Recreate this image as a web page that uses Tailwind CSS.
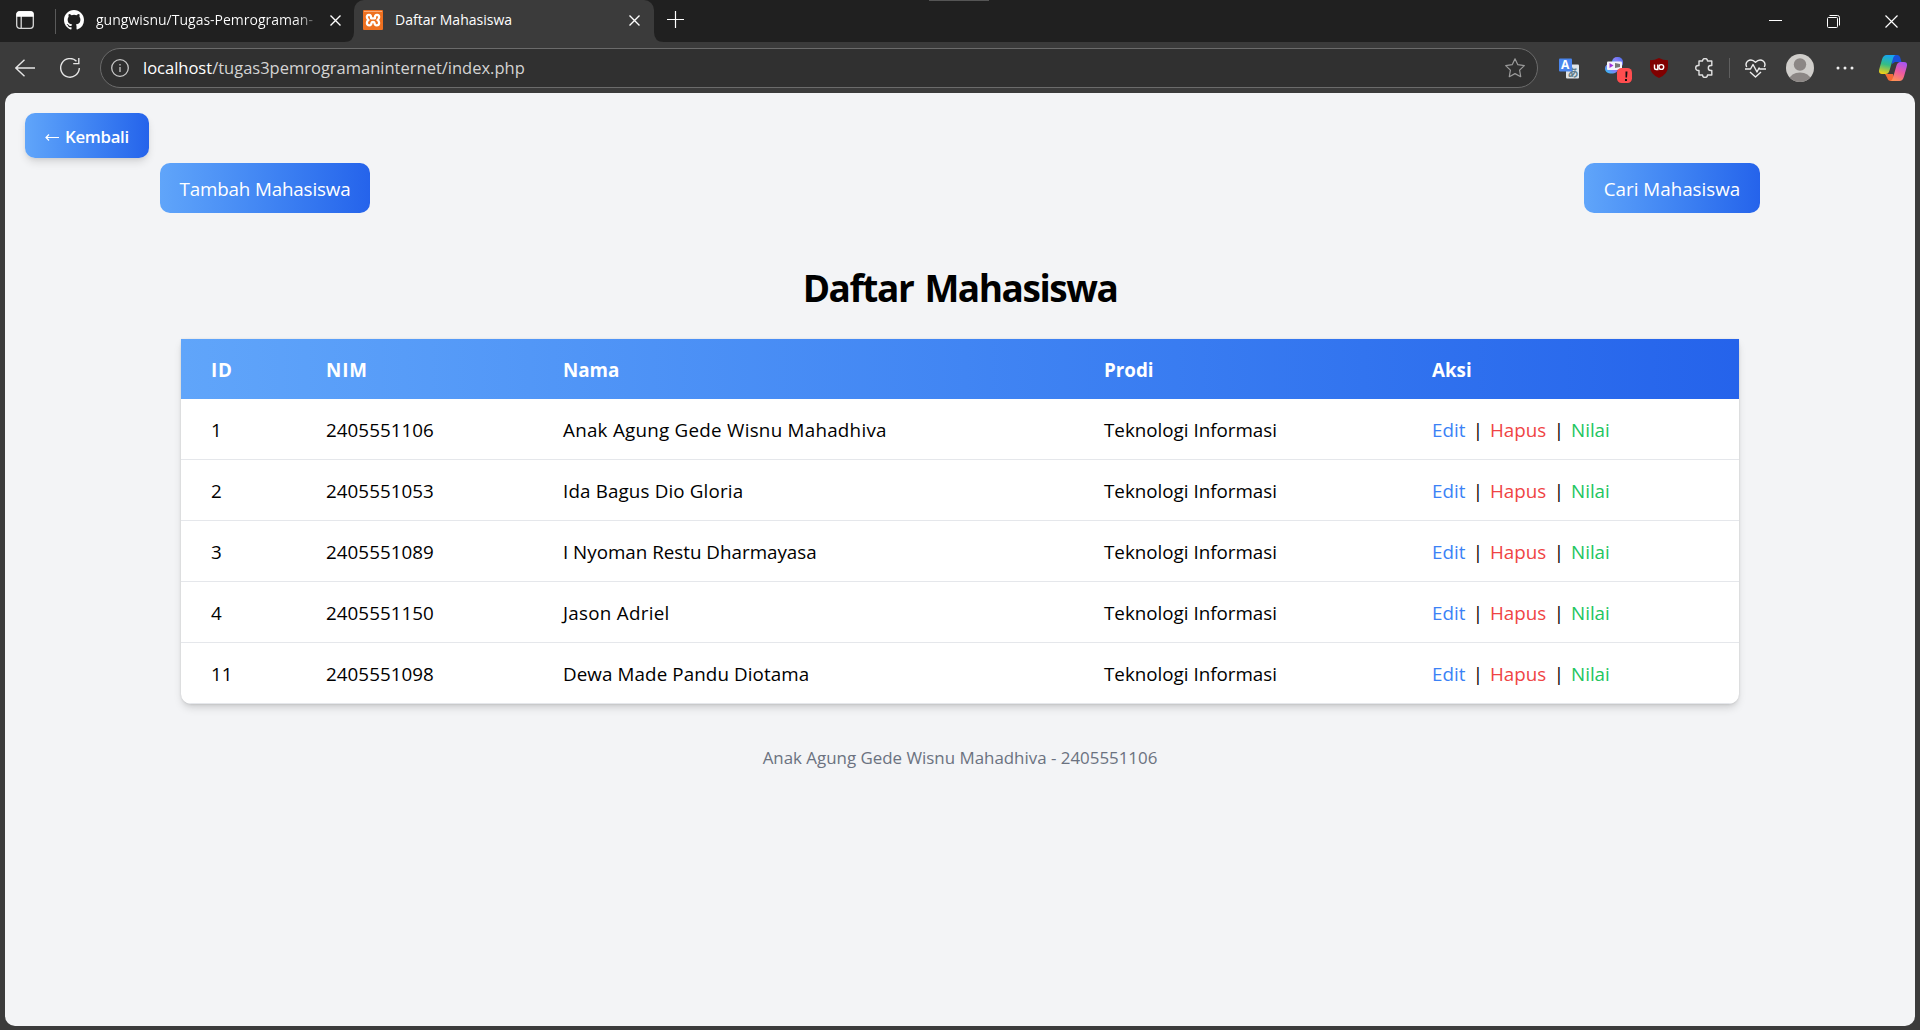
<!DOCTYPE html>
<html lang="id">
<head>
<meta charset="utf-8">
<title>Daftar Mahasiswa</title>
<script src="https://cdn.jsdelivr.net/npm/@tailwindcss/browser@4"></script>
</head>
<body class="flex h-[1030px] w-[1920px] flex-col overflow-hidden bg-[#3b3b3b] font-['Open_Sans',sans-serif]">
<!-- Tab strip -->
<header class="relative flex h-[42px] shrink-0 bg-[#202020] text-[14px] text-white">
  <div class="absolute left-[929px] top-0 h-px w-[60px] bg-[#555]"></div>
  <div class="flex h-[42px] w-[55px] items-center pl-4">
    <svg class="h-[18px] w-[18px] -translate-y-px" viewBox="0 0 18 18" fill="none" stroke="#d8d8d8" stroke-width="1.3"><rect x=".7" y=".7" width="16.6" height="16.6" rx="3"/><path d="M5.2 5v12"/><path d="M1 3.500Q1 1 3.500 1h11q2.500 0 2.500 2.500V5H1z" fill="#fff" stroke="#fff"/></svg>
  </div>
  <div class="mt-[9px] h-[25px] w-px bg-[#5a5a5a]"></div>
  <div class="flex h-10 w-[298px] items-center pl-2">
    <svg class="h-5 w-5 shrink-0" viewBox="0 0 16 16" fill="#fff"><path d="M8 0C3.580 0 0 3.580 0 8c0 3.540 2.290 6.530 5.470 7.590.4.070.55-.17.55-.38v-1.490c-2.010.37-2.530-.49-2.690-.94-.09-.23-.48-.94-.82-1.130-.28-.15-.68-.52-.01-.53.63-.01 1.080.58 1.230.82.72 1.210 1.870.87 2.330.66.07-.52.28-.87.51-1.070-1.780-.2-3.640-.89-3.640-3.950 0-.87.310-1.590.82-2.150-.08-.2-.36-1.020.08-2.120 0 0 .67-.21 2.200.82a7.600 7.600 0 0 1 4 0c1.530-1.040 2.200-.82 2.200-.82.44 1.100.16 1.920.08 2.120.51.56.82 1.270.82 2.150 0 3.070-1.870 3.750-3.650 3.950.29.25.54.73.54 1.480v2.200c0 .21.150.46.55.38A8 8 0 0 0 16 8c0-4.420-3.580-8-8-8z"/></svg>
    <div class="-mt-px ml-3 w-[222px] overflow-hidden whitespace-nowrap bg-linear-to-r from-white from-90% to-[#444] bg-clip-text text-transparent">gungwisnu/Tugas-Pemrograman-</div>
    <svg class="ml-3 h-[11px] w-[11px] shrink-0" viewBox="0 0 11 11" stroke="#fff" stroke-width="1.400"><path d="M.5.5l10 10M10.500.5l-10 10"/></svg>
  </div>
  <div class="relative flex h-[42px] w-[300px] items-center rounded-t-[10px] bg-[#3b3b3b] pb-0.5 pl-[9px]">
    <svg class="absolute -left-[10px] bottom-0 h-[10px] w-[10px]" viewBox="0 0 10 10"><path d="M10 0v10H0Q10 10 10 0z" fill="#3b3b3b"/></svg>
    <svg class="absolute -right-[10px] bottom-0 h-[10px] w-[10px]" viewBox="0 0 10 10"><path d="M0 0v10h10Q0 10 0 0z" fill="#3b3b3b"/></svg>
    <svg class="h-5 w-5" viewBox="0 0 20 20"><rect width="20" height="20" rx="1" fill="#ee7020"/><path d="M1 1.500h18" stroke="#f9a875"/><path d="M8 7.800Q8.300 4.800 6 4.800Q3.600 5 3.900 7.300Q4 9 5.500 10Q3.800 11 3.900 13Q4 15.400 6.300 15.400Q8.300 15.300 8.500 13Q8.700 11.800 10 11.800Q11.300 11.800 11.500 13Q11.700 15.300 13.700 15.400Q16 15.400 16.100 13Q16.200 11 14.500 10Q16 9 16.100 7.300Q16.400 5 14 4.800Q11.700 4.800 12 7.800M8 8.300h4" fill="none" stroke="#fff" stroke-width="2.300" stroke-linecap="round" stroke-linejoin="round"/></svg>
    <span class="-mt-px ml-3">Daftar Mahasiswa</span>
    <svg class="absolute left-[275px] top-[15px] h-[11px] w-[11px]" viewBox="0 0 11 11" stroke="#fff" stroke-width="1.400"><path d="M.5.5l10 10M10.500.5l-10 10"/></svg>
  </div>
  <svg class="ml-[13px] mt-[11px] h-[17px] w-[17px]" viewBox="0 0 17 17" stroke="#fff" stroke-width="1.200"><path d="M8.500 0v17M0 8.500h17"/></svg>
  <div class="ml-auto flex h-[42px] items-center gap-[45px] pr-[22px]">
    <svg class="h-[13px] w-[13px]" viewBox="0 0 13 13" stroke="#fff"><path d="M0 5.500h13"/></svg>
    <svg class="h-[13px] w-[13px]" viewBox="0 0 13 13" fill="none" stroke="#fff"><rect x=".5" y="2.500" width="10" height="10" rx="1"/><path d="M2.500.5h8q2 0 2 2v8"/></svg>
    <svg class="h-[13px] w-[13px]" viewBox="0 0 13 13" stroke="#fff" stroke-width="1.200"><path d="M.5.5l12 12M12.500.5l-12 12"/></svg>
  </div>
</header>
<!-- Toolbar -->
<nav class="flex h-[51px] shrink-0 items-start pt-[6px]">
  <div class="flex h-10 w-[100px] items-center pl-[15px]">
    <svg class="h-[18px] w-5" viewBox="0 0 20 18" fill="none" stroke="#e6e6e6" stroke-width="1.400"><path d="M20 9H.8M9.500.7L.8 9l8.700 8.300"/></svg>
    <svg class="ml-[25px] h-5 w-5" viewBox="0 0 20 20" fill="none" stroke="#e6e6e6" stroke-width="1.400"><path d="M16.500 3.200A9.300 9.300 0 1 0 19.300 10M18.800 0v5.600h-5.600"/></svg>
  </div>
  <div class="flex h-10 w-[1438px] items-center rounded-full border border-[#6b6b6b] bg-[#303030] pl-[10px] text-[16.5px] text-[#d4d4d4]">
    <svg class="h-[18px] w-[18px]" viewBox="0 0 18 18" fill="none" stroke="#c8c8c8" stroke-width="1.300"><circle cx="9" cy="9" r="8.300"/><path d="M9 8v5M9 5v1.600"/></svg>
    <span class="ml-[14px] whitespace-nowrap"><span class="text-white">localhost</span>/tugas3pemrogramaninternet/index.php</span>
    <svg class="ml-auto mr-3 h-5 w-5" viewBox="0 0 20 20" fill="none" stroke="#9a9a9a" stroke-width="1.200" stroke-linejoin="round"><path d="M10 .8l2.800 5.900 6.500.9-4.700 4.500 1.100 6.600L10 15.600l-5.700 3.100 1.100-6.600L.7 7.600l6.500-.9z"/></svg>
  </div>
  <div class="flex h-10 items-center">
    <svg class="ml-[21px] h-[21px] w-5 overflow-visible" viewBox="0 0 20 21"><rect x="7" y="6.500" width="13" height="14" rx="1" fill="#dfe4e8"/><text x="8.500" y="18.500" font-size="11" font-weight="700" fill="#607d8b" font-family="Noto Sans CJK JP, sans-serif">あ</text><path d="M1 .5h11q1 0 1 1v12H1q-1 0-1-1v-11q0-1 1-1z" fill="#4a86ee"/><text x="2" y="11" font-size="12" font-weight="700" fill="#fff">A</text></svg>
    <svg class="ml-[26px] mt-1 h-[26px] w-[27px]" viewBox="0 0 27 26"><defs><linearGradient id="bub" x1="0" y1="1" x2="1" y2="0"><stop stop-color="#20c8f5"/><stop offset=".55" stop-color="#8b7cf6"/><stop offset="1" stop-color="#3d6ff0"/></linearGradient></defs><rect x="7" y="0" width="11" height="11" rx="5" fill="url(#bub)"/><rect x="0" y="6.500" width="13" height="10" rx="5" fill="url(#bub)"/><rect x="2" y="4.500" width="15" height="8.500" rx="1" fill="#f4f3fa"/><path d="M4.500 6v5l4-2.500z" fill="#a02ee0"/><path d="M10 6l5 1v3l-5 1z" fill="#777"/><rect x="12" y="11" width="15" height="15" rx="4.500" fill="#ff4d4f"/><path d="M20.500 14.500h2l-.5 6h-1.500zM20 22h2v2h-2z" fill="#111"/></svg>
    <svg class="ml-[18px] h-5 w-[18px]" viewBox="0 0 18 20"><path d="M9 0q4 2.200 9 2.200V9q0 7-9 11Q0 16 0 9V2.200Q5 2.200 9 0z" fill="#800000"/><path d="M4.500 6.500v3.200q0 1.800 1.800 1.800h1.500V6.500" fill="none" stroke="#fff" stroke-width="1.400"/><circle cx="11.300" cy="9" r="2.400" fill="none" stroke="#fff" stroke-width="1.400"/></svg>
    <svg class="ml-[27px] h-5 w-[19px]" viewBox="0 0 19 20" fill="none" stroke="#e0e0e0" stroke-width="1.400" stroke-linejoin="round"><path d="M4 3h3.500a2.500 2.500 0 0 1 5 0h4.300v4.500h-1a2.500 2.500 0 0 0 0 5h1V17h-4.300a2.500 2.500 0 0 1-5 0H4v-4.500H3.200a2.500 2.500 0 0 1 0-5H4z"/></svg>
    <div class="ml-[15px] h-5 w-px bg-[#5f5f5f]"></div>
    <svg class="ml-[15px] h-[19px] w-[21px]" viewBox="0 0 21 19" fill="none" stroke="#ededed" stroke-width="1.400" stroke-linejoin="round"><path d="M1.700 8Q0 4.500 2.500 2.200 6.500-.8 10.500 3.200q4-4 8-1Q21 4.500 19.300 8M0 10h5.500l2.500-4.500 4 7.500 2-4 .8 1H21M5 13l5.500 5 5.500-5"/></svg>
    <svg class="ml-5 h-7 w-7" viewBox="0 0 28 28"><defs><clipPath id="face"><circle cx="14" cy="14" r="14"/></clipPath></defs><g clip-path="url(#face)"><rect width="28" height="28" fill="#d0cecb"/><circle cx="14" cy="10.500" r="6.200" fill="#8c8785"/><ellipse cx="14" cy="25.500" rx="10.500" ry="7" fill="#8c8785"/></g></svg>
    <svg class="ml-[22px] h-1 w-[18px]" viewBox="0 0 18 4" fill="#eee"><circle cx="2" cy="2" r="1.500"/><circle cx="9" cy="2" r="1.500"/><circle cx="16" cy="2" r="1.500"/></svg>
    <svg class="ml-[25px] h-[26px] w-7" viewBox="0 0 28 26"><defs><linearGradient id="ca" x1=".5" y1="0" x2=".3" y2="1"><stop stop-color="#16a5f3"/><stop offset=".5" stop-color="#35bd85"/><stop offset="1" stop-color="#f5cf15"/></linearGradient><linearGradient id="cb" x1=".7" y1="0" x2=".3" y2="1"><stop stop-color="#a755f0"/><stop offset=".5" stop-color="#ee5aa0"/><stop offset="1" stop-color="#ff9155"/></linearGradient></defs><path d="M13 0h5.500q2 0 2.700 2.500L22.500 7h-6.500l-3 2z" fill="#1a50d8"/><path d="M6 19h8l2 7H12q-3 0-4-3.500z" fill="#f36a35"/><path d="M7.500 0H17q-2 0-3 3.500L10.500 15.500Q9.500 19 6.500 19H3q-4 0-2.700-5L3 4.500Q4.300 0 7.500 0z" fill="url(#ca)"/><path d="M20.500 26H11q2 0 3-3.500L17.500 10.500Q18.500 7 21.500 7H25q4 0 2.700 5L25 21.500Q23.700 26 20.500 26z" fill="url(#cb)"/></svg>
  </div>
</nav>
<!-- Page -->
<main class="mx-[5px] h-[933px] overflow-hidden rounded-[10px] bg-[#f3f4f6] pt-5 text-[18.8px] text-black">
  <a class="ml-5 flex h-[45px] w-[124px] items-center rounded-[10px] bg-linear-to-r from-[#60a5fa] to-[#2563eb] pl-5 text-[16.8px] font-semibold tracking-[-0.3px] text-white shadow-[0_5px_8px_-1px_rgba(0,0,0,0.12),0_2px_5px_-2px_rgba(0,0,0,0.1)]"><svg class="mr-[6px] mt-[3px] h-[7px] w-[14px]" viewBox="0 0 14 7" fill="none" stroke="#fff" stroke-width="1.200"><path d="M14 3.500H1M4 .5l-3 3 3 3"/></svg><span class="mt-0.5">Kembali</span></a>
  <div class="mx-[155px] mt-[5px] flex justify-between text-white">
    <a class="flex h-[50px] w-[210px] items-center justify-center rounded-[10px] bg-linear-to-r from-[#60a5fa] to-[#2563eb] pt-0.5 tracking-[-0.15px]">Tambah Mahasiswa</a>
    <a class="flex h-[50px] w-[176px] items-center justify-center rounded-[10px] bg-linear-to-r from-[#60a5fa] to-[#2563eb] pt-0.5">Cari Mahasiswa</a>
  </div>
  <h1 class="mt-[50px] text-center text-[37px] font-bold leading-[50px] tracking-[-1.45px] [word-spacing:3px]">Daftar Mahasiswa</h1>
  <table class="mx-44 mt-[26px] block w-[1558px] overflow-hidden rounded-b-[10px] bg-white text-left shadow-[0_5px_8px_-1px_rgba(0,0,0,0.13),0_2px_5px_-2px_rgba(0,0,0,0.12),0_0_2px_rgba(0,0,0,0.1)]">
    <thead class="block bg-linear-to-r from-[#60a5fa] to-[#2563eb] text-white">
      <tr class="grid h-[60px] grid-cols-[115px_237px_541px_328px_337px] items-center pt-0.5 font-bold [&>th]:pl-[30px]"><th class="tracking-[0.8px]">ID</th><th class="tracking-[0.9px]">NIM</th><th>Nama</th><th>Prodi</th><th>Aksi</th></tr>
    </thead>
    <tbody id="rows" class="block"></tbody>
  </table>
  <footer class="mt-10 text-center text-[16.9px] leading-7 text-[#6b7280]">Anak Agung Gede Wisnu Mahadhiva - 2405551106</footer>
</main>
<script>
const students = [
  [1, '2405551106', 'Anak Agung Gede Wisnu Mahadhiva', 'tracking-[0.26px]'],
  [2, '2405551053', 'Ida Bagus Dio Gloria', 'tracking-[0.15px]'],
  [3, '2405551089', 'I Nyoman Restu Dharmayasa', ''],
  [4, '2405551150', 'Jason Adriel', 'tracking-[0.28px]'],
  [11, '2405551098', 'Dewa Made Pandu Diotama', 'tracking-[0.1px]'],
];
document.getElementById('rows').innerHTML = students.map(([id, nim, nama, spacing]) => `
  <tr class="grid h-[61px] grid-cols-[115px_237px_541px_328px_337px] items-center border-b border-[#e5e7eb] pt-0.5 [&>td]:pl-[30px]">
    <td>${id}</td><td class="tracking-[0.05px]">${nim}</td><td class="${spacing}">${nama}</td><td>Teknologi Informasi</td>
    <td class="flex"><a class="w-10 text-[#3b82f6]">Edit</a><span class="w-3 text-center">|</span><a class="ml-1.5 w-[63px] text-[#ef4444]">Hapus</a><span class="w-3 text-center">|</span><a class="ml-1.5 text-[#22c55e]">Nilai</a></td>
  </tr>`).join('');
</script>
</body>
</html>
